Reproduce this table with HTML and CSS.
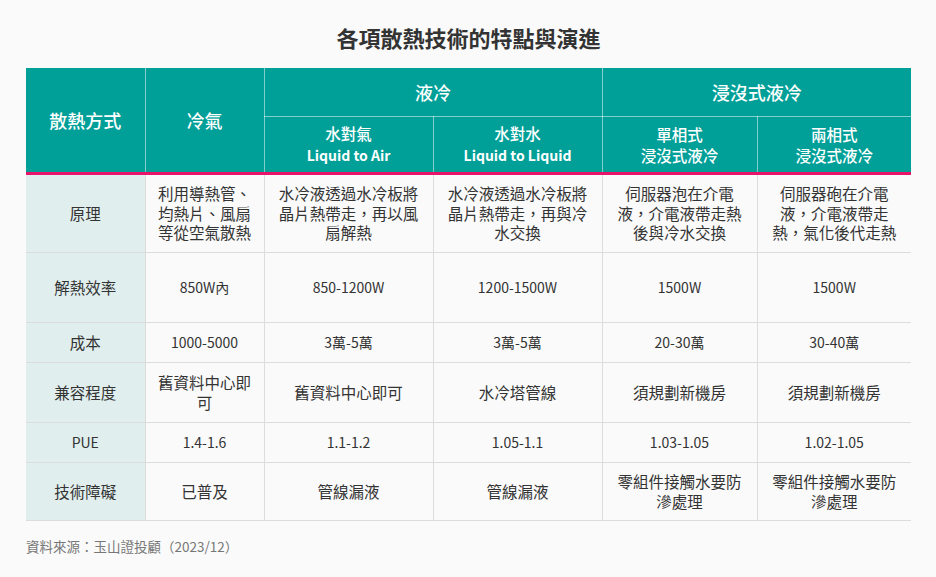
FILE: index.html
```html
<!DOCTYPE html>
<html lang="zh-Hant">
<head>
<meta charset="utf-8">
<title>各項散熱技術的特點與演進</title>
<link rel="stylesheet" href="styles.css">
</head>
<body>
<div class="page">
  <h1 class="title">各項散熱技術的特點與演進</h1>
  <table class="tbl">
    <colgroup>
      <col class="c1"><col class="c2"><col class="c3"><col class="c4"><col class="c5"><col class="c6">
    </colgroup>
    <thead>
      <tr class="h1">
        <th rowspan="2" class="big first">散熱方式</th>
        <th rowspan="2" class="big">冷氣</th>
        <th colspan="2" class="big">液冷</th>
        <th colspan="2" class="big last">浸沒式液冷</th>
      </tr>
      <tr class="h2">
        <th>水對氣<br><span class="en">Liquid to Air</span></th>
        <th>水對水<br><span class="en">Liquid to Liquid</span></th>
        <th>單相式<br>浸沒式液冷</th>
        <th class="last">兩相式<br>浸沒式液冷</th>
      </tr>
    </thead>
    <tbody>
      <tr class="r1">
        <td class="lbl">原理</td>
        <td>利用導熱管、均熱片、風扇等從空氣散熱</td>
        <td>水冷液透過水冷板將晶片熱帶走，再以風扇解熱</td>
        <td>水冷液透過水冷板將晶片熱帶走，再與冷水交換</td>
        <td>伺服器泡在介電液，介電液帶走熱後與冷水交換</td>
        <td class="last">伺服器砲在介電液，介電液帶走熱，氣化後代走熱</td>
      </tr>
      <tr class="r2">
        <td class="lbl">解熱效率</td>
        <td class="num">850W內</td>
        <td class="num">850-1200W</td>
        <td class="num">1200-1500W</td>
        <td class="num">1500W</td>
        <td class="num last">1500W</td>
      </tr>
      <tr class="r3">
        <td class="lbl">成本</td>
        <td class="num">1000-5000</td>
        <td class="num">3萬-5萬</td>
        <td class="num">3萬-5萬</td>
        <td class="num">20-30萬</td>
        <td class="num last">30-40萬</td>
      </tr>
      <tr class="r4">
        <td class="lbl">兼容程度</td>
        <td>舊資料中心即可</td>
        <td>舊資料中心即可</td>
        <td>水冷塔管線</td>
        <td>須規劃新機房</td>
        <td class="last">須規劃新機房</td>
      </tr>
      <tr class="r5">
        <td class="lbl num">PUE</td>
        <td class="num">1.4-1.6</td>
        <td class="num">1.1-1.2</td>
        <td class="num">1.05-1.1</td>
        <td class="num">1.03-1.05</td>
        <td class="num last">1.02-1.05</td>
      </tr>
      <tr class="r6">
        <td class="lbl">技術障礙</td>
        <td>已普及</td>
        <td>管線漏液</td>
        <td>管線漏液</td>
        <td>零組件接觸水要防滲處理</td>
        <td class="last">零組件接觸水要防滲處理</td>
      </tr>
    </tbody>
  </table>
  <p class="source">資料來源：玉山證投顧（2023/12）</p>
</div>
</body>
</html>
```

FILE: styles.css
```css
html, body {
  margin: 0;
  padding: 0;
  background: #fafafa;
}
body {
  font-family: "Noto Sans CJK TC", "Noto Sans", sans-serif;
  color: #333;
}
.page {
  width: 885px;
  padding: 0 25px 0 26px;
}
.title {
  margin: 0;
  height: 68px;
  line-height: 74px;
  font-size: 22px;
  font-weight: 700;
  text-align: center;
  color: #333;
}
.tbl {
  width: 885px;
  border-collapse: collapse;
  table-layout: fixed;
}
.c1 { width: 119px; }
.c2 { width: 119px; }
.c3 { width: 169px; }
.c4 { width: 169px; }
.c5 { width: 155px; }
.c6 { width: 154px; }

.tbl th {
  background: #009f98;
  color: #fff;
  font-weight: 500;
  font-size: 15.5px;
  line-height: 22px;
  padding: 0 8px;
  border: 1px solid rgba(255, 255, 255, 0.5);
  text-align: center;
  vertical-align: middle;
}
.tbl th.big { font-size: 18px; }
.tbl thead tr.h1 th { border-top: none; height: 48px; }
.tbl thead tr.h2 th { height: 55px; line-height: 21px; }
.tbl thead th[rowspan], .tbl thead tr.h2 th {
  border-bottom: 3px solid #e8146c;
}
.tbl .first { border-left: none; }
.tbl .last { border-right: none; }
.tbl th .en {
  font-size: 14px;
  font-weight: 700;
}

.tbl td {
  font-size: 15.5px;
  line-height: 19.5px;
  padding: 0 8px;
  border: 1px solid #dcdcdc;
  text-align: center;
  vertical-align: middle;
  color: #333;
}
.tbl td.num { font-size: 14px; }
.tbl td.lbl {
  background: #e1eeee;
  border-left: none;
  font-size: 15.5px;
}
.tbl td.lbl.num { font-size: 14px; }
.tbl .r1 td { height: 77px; }
.tbl .r2 td { height: 69px; }
.tbl .r3 td { height: 39px; }
.tbl .r4 td { height: 59px; }
.tbl .r5 td { height: 39px; }
.tbl .r6 td { height: 57px; }

.source {
  margin: 15px 0 0;
  font-size: 13.5px;
  color: #777;
  line-height: 20px;
}
```
